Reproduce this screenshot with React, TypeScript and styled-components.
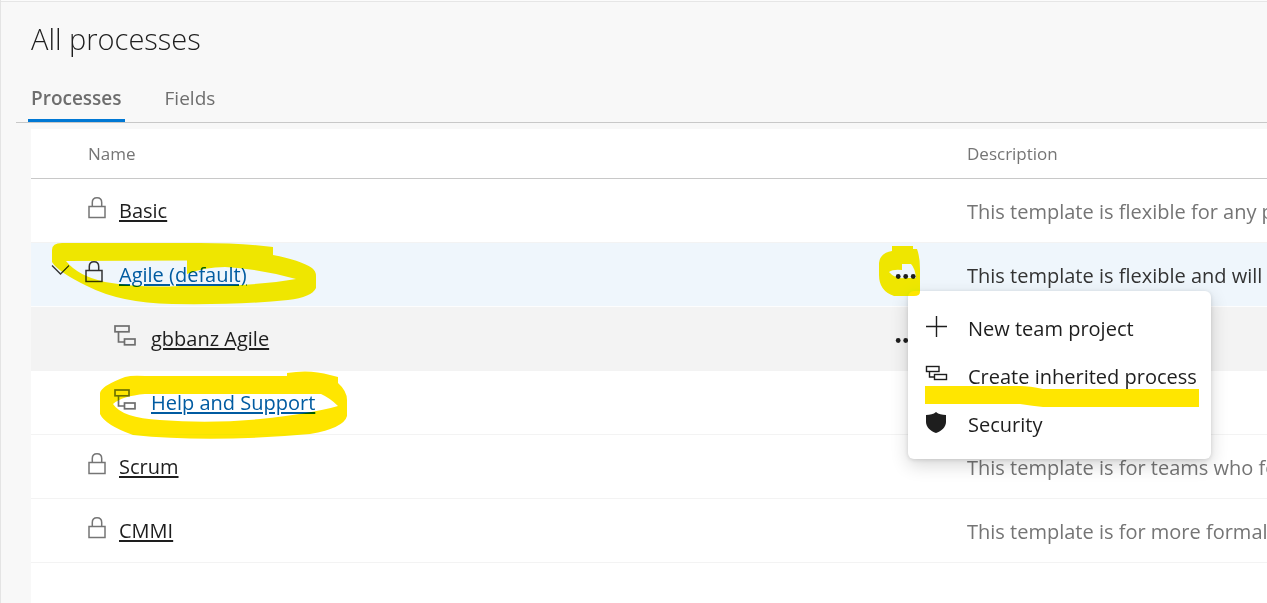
import React from "react";
import styled, { createGlobalStyle } from "styled-components";

const GlobalStyle = createGlobalStyle`
  * { box-sizing: border-box; }
  body {
    margin: 0;
    background: #f8f8f8;
    color: #1e1e1e;
    font-family: "Open Sans", "Noto Sans", sans-serif;
    font-size: 20px;
    line-height: 28px;
  }
`;

const Page = styled.div`
  position: relative;
  display: flex;
  flex-direction: column;
  min-height: 100vh;
  overflow: hidden;
  border-left: 1px solid #e4e4e4;
  box-shadow: inset 0 1px #fbfbfb, inset 0 2px #e6e6e6;
`;

const Title = styled.h1`
  margin: 0;
  padding: 18px 30px 0;
  font-size: 29px;
  line-height: 42px;
  font-weight: 300;
`;

const Tabs = styled.nav`
  display: flex;
  gap: 37px;
  margin-left: 15px;
  padding: 19px 12px 0;
  border-bottom: 1px solid #c8c8c8;
`;

const Tab = styled.a<{ $active?: boolean }>`
  height: 43px;
  padding: 5px 3px 0;
  color: #6e6e6e;
  font-size: 19px;
  font-weight: ${(p) => (p.$active ? 600 : 400)};
  text-decoration: none;
  border-bottom: 3px solid ${(p) => (p.$active ? "#0078d4" : "transparent")};
`;

const Panel = styled.main`
  flex: 1;
  margin: 6px 0 0 30px;
  background: #fff;
`;

const Table = styled.table`
  width: 100%;
  table-layout: fixed;
  border-collapse: separate;
  border-spacing: 0;
`;

const NameCol = styled.col`
  width: 863px;
`;

const ActionsCol = styled.col`
  width: 73px;
`;

const HeadCell = styled.th`
  height: 50px;
  padding: 0;
  border-bottom: 1px solid #c8c8c8;
  color: #757575;
  font-size: 17px;
  font-weight: 400;
  text-align: left;
  &:first-child { padding-left: 57px; }
`;

const Row = styled.tr<{ $tone?: "selected" | "hover" }>`
  background: ${(p) =>
    p.$tone === "selected" ? "#eff6fc" : p.$tone === "hover" ? "#f3f3f3" : "#fff"};
  color: ${(p) => (p.$tone === "selected" ? "#333" : "#757575")};
  td { border-bottom-color: ${(p) => (p.$tone === "selected" ? "#fdfdfd" : "#f3f3f3")}; }
`;

const Cell = styled.td`
  height: 64px;
  padding: 0;
  border-bottom: 1px solid;
  white-space: nowrap;
`;

const Description = styled(Cell)`
  padding-top: 2px;
  overflow: hidden;
`;

const NameLine = styled.div<{ $child?: boolean }>`
  display: flex;
  align-items: center;
  padding-left: ${(p) => (p.$child ? 82 : 20)}px;
`;

const Expander = styled.button`
  width: 33px;
  height: 32px;
  padding: 0;
  border: 0;
  background: none;
  color: #333;
  svg { display: block; }
`;

const IconSlot = styled.span<{ $indent?: boolean; $child?: boolean }>`
  flex: none;
  width: ${(p) => (p.$child ? 38 : p.$indent ? 32 : 35)}px;
  margin-left: ${(p) => (p.$indent ? 36 : 0)}px;
  height: 30px;
  svg { display: block; }
`;

const ProcessLink = styled.a<{ $visited?: boolean }>`
  color: ${(p) => (p.$visited ? "#005ba1" : "#1e1e1e")};
  text-decoration: underline;
  text-decoration-thickness: 2px;
  text-underline-offset: 2px;
`;

const Actions = styled.div`
  position: relative;
  width: 24px;
`;

const MoreButton = styled.button`
  display: block;
  width: 24px;
  height: 24px;
  padding: 0;
  border: 0;
  background: none;
  color: #1e1e1e;
  svg { display: block; }
`;

const Menu = styled.div`
  position: absolute;
  z-index: 2;
  top: 28px;
  left: 14px;
  width: 303px;
  padding: 12px 0;
  border-radius: 6px;
  background: #fff;
  box-shadow: 0 6px 18px rgba(0, 0, 0, 0.16), 0 1px 4px rgba(0, 0, 0, 0.12);
`;

const MenuItem = styled.button`
  display: flex;
  align-items: center;
  gap: 20px;
  width: 100%;
  height: 48px;
  padding: 4px 16px 0;
  border: 0;
  background: none;
  color: #1e1e1e;
  font: inherit;
  white-space: nowrap;
  svg { flex: none; margin-bottom: 6px; }
`;

const Marker = styled.svg`
  position: absolute;
  z-index: 3;
  top: 0;
  left: -1px;
  pointer-events: none;
  mix-blend-mode: darken;
`;

const Lock = ({ color = "#757575" }: { color?: string }) => (
  <svg width="20" height="24" viewBox="0 0 20 24" fill="none" stroke={color} strokeWidth="1.5">
    <rect x="2" y="10.5" width="16" height="11" />
    <path d="M5.3 10.5V6.5C5.3 3.5 7.2 1.7 10 1.7S14.7 3.5 14.7 6.5V10.5" />
  </svg>
);

const Inherit = () => (
  <svg width="24" height="24" viewBox="0 0 24 24" fill="none" stroke="#6e6e6e" strokeWidth="1.7">
    <rect x="2" y="2" width="14" height="5.8" />
    <rect x="11.5" y="15" width="10.5" height="5.8" />
    <path d="M5.5 7.8V18H11.5" />
  </svg>
);

const MenuInherit = () => (
  <svg width="24" height="24" viewBox="0 0 24 24" fill="none" stroke="#1e1e1e" strokeWidth="1.4">
    <rect x="2.5" y="4.5" width="12.5" height="5" />
    <rect x="10.5" y="12.5" width="12" height="5" />
    <path d="M5.5 9.5V15H10.5" />
  </svg>
);

const Plus = () => (
  <svg width="24" height="24" viewBox="0 0 24 24" stroke="#1e1e1e" strokeWidth="1.4">
    <path d="M2 12.5H23M12.5 2V23" />
  </svg>
);

const Shield = () => (
  <svg width="24" height="24" viewBox="0 0 24 24" fill="#1e1e1e">
    <path d="M12 2C14.5 4.2 18 5 22 5V12C22 17 17.5 21 12 23C6.5 21 2 17 2 12V5C6 5 9.5 4.2 12 2Z" />
  </svg>
);

const Chevron = () => (
  <svg width="20" height="24" viewBox="0 0 20 24" fill="none" stroke="currentColor" strokeWidth="1.3">
    <path d="M1 2.500L9.500 11L18 2.500" />
  </svg>
);

const Dots = () => (
  <svg width="24" height="24" viewBox="0 0 24 24" fill="currentColor">
    <circle cx="4.2" cy="13.5" r="2.4" />
    <circle cx="11.7" cy="13.5" r="2.4" />
    <circle cx="19.2" cy="13.5" r="2.4" />
  </svg>
);

type Process = {
  name: string;
  description?: string;
  child?: boolean;
  visited?: boolean;
  expanded?: boolean;
  more?: boolean;
  tone?: "selected" | "hover";
};

const processes: Process[] = [
  { name: "Basic", description: "This template is flexible for any process" },
  {
    name: "Agile (default)",
    description: "This template is flexible and will work",
    visited: true,
    expanded: true,
    more: true,
    tone: "selected",
  },
  { name: "gbbanz Agile", child: true, more: true, tone: "hover" },
  { name: "Help and Support", child: true, visited: true },
  { name: "Scrum", description: "This template is for teams who follow" },
  { name: "CMMI", description: "This template is for more formal" },
];

const ProcessMenu = () => (
  <Menu role="menu">
    <MenuItem role="menuitem"><Plus />New team project</MenuItem>
    <MenuItem role="menuitem"><MenuInherit />Create inherited process</MenuItem>
    <MenuItem role="menuitem"><Shield />Security</MenuItem>
  </Menu>
);

const ProcessRow = ({ item }: { item: Process }) => (
  <Row $tone={item.tone}>
    <Cell>
      <NameLine $child={item.child}>
        {item.expanded && (
          <Expander aria-label="Collapse" aria-expanded="true"><Chevron /></Expander>
        )}
        <IconSlot $indent={!item.expanded && !item.child} $child={item.child}>
          {item.child ? <Inherit /> : <Lock color={item.expanded ? "#333" : undefined} />}
        </IconSlot>
        <ProcessLink href="#" $visited={item.visited}>{item.name}</ProcessLink>
      </NameLine>
    </Cell>
    <Cell>
      {item.more && (
        <Actions>
          <MoreButton aria-label="More actions"><Dots /></MoreButton>
          {item.expanded && <ProcessMenu />}
        </Actions>
      )}
    </Cell>
    <Description>{item.description}</Description>
  </Row>
);

const Highlights = () => (
  <Marker width="1267" height="603" viewBox="0 0 1267 603" fill="#ffe600" fillRule="evenodd" aria-hidden="true">
    <path d="M52 250Q52 243 62 243H200Q240 243 273 247V255Q300 260 312 268Q316 271 316 276V288Q312 297 288 300Q240 305 172 304Q120 303 87 286Q58 272 52 262ZM66 261Q78 276 105 282Q140 288 180 286Q250 287 296 279Q260 269 225 267Q205 267 187 274V260.5Z" />
    <path d="M100 393Q101 386 125 377Q132 375 145 376H287V373Q310 369 330 375L338 377V383Q347 391 347 400V416Q344 428 310 434Q210 443 133 435Q105 425 100 414ZM113 404Q122 418 160 420Q210 424 260 419Q310 414 338 406Q330 398 321 394H145Q122 396 113 404Z" />
    <path d="M892 251V246H913V249H917Q920 257 920 269V292Q920 296 914 296H894Q879 291 879 275V263Q880 253 892 251ZM889 272Q895 279 904 278H916Q915 268 911 264H902V270Q893 269 889 272Z" />
    <path d="M925 386H1020Q1030 386 1043 389H1199V407H1043Q1033 406 1020 404H925Z" />
  </Marker>
);

export default function App() {
  return (
    <Page>
      <GlobalStyle />
      <Title>All processes</Title>
      <Tabs>
        <Tab href="#" $active>Processes</Tab>
        <Tab href="#">Fields</Tab>
      </Tabs>
      <Panel>
        <Table>
          <colgroup><NameCol /><ActionsCol /><col /></colgroup>
          <thead>
            <tr>
              <HeadCell scope="col">Name</HeadCell>
              <HeadCell aria-label="Actions" />
              <HeadCell scope="col">Description</HeadCell>
            </tr>
          </thead>
          <tbody>
            {processes.map((item) => <ProcessRow key={item.name} item={item} />)}
          </tbody>
        </Table>
      </Panel>
      <Highlights />
    </Page>
  );
}
